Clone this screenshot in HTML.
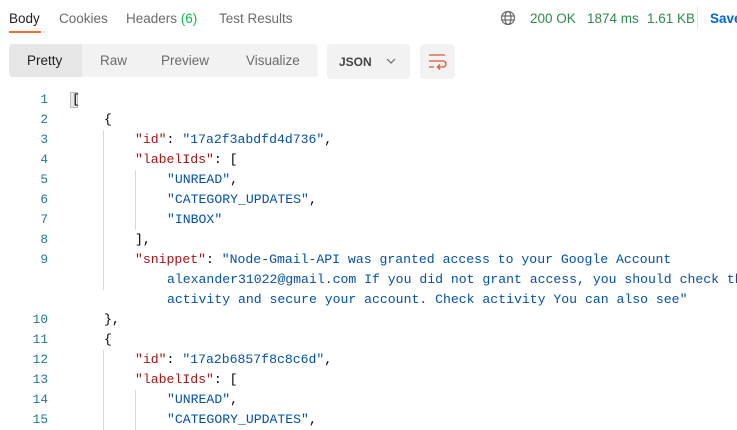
<!DOCTYPE html>
<html><head><style>
body{margin:0;width:737px;height:415px;overflow:hidden;background:#fff;font-family:"Liberation Sans",sans-serif;position:relative}
.t{position:absolute;top:11px;font-size:13.5px;color:#6b6b6b}
.ul{position:absolute;left:9px;top:31px;width:32px;height:2px;background:#f26b3a}
.seg{position:absolute;left:9px;top:44px;width:309px;height:33px;background:#f2f2f2;border-radius:4px}
.seg .a{position:absolute;left:0;top:0;width:73px;height:33px;background:#e6e6e6;border-radius:4px 0 0 4px}
.s{position:absolute;top:53px;font-size:13.5px;color:#6b6b6b}
.code{position:absolute;left:0;top:90px;font-family:"Liberation Mono",monospace;font-size:13.15px}
.l{position:absolute;height:20px;line-height:20px;white-space:pre;color:#000}
.n{position:absolute;width:48px;text-align:right;height:20px;line-height:20px;color:#237893;font-family:"Liberation Mono",monospace;font-size:12.8px}
.k{color:#a31515}.v{color:#0451a5}
.g{position:absolute;width:1px;background:#d9d9d9}
</style></head><body>
<div class="t" style="left:9px;color:#212121">Body</div>
<div class="t" style="left:59px">Cookies</div>
<div class="t" style="left:126px">Headers <span style="color:#0cbb52">(6)</span></div>
<div class="t" style="left:219px">Test Results</div>
<div class="ul"></div>
<svg style="position:absolute;left:500px;top:10px" width="16" height="16" viewBox="0 0 16 16" fill="none" stroke="#6b6b6b" stroke-width="1.2"><circle cx="8" cy="8" r="6.5"/><ellipse cx="8" cy="8" rx="3" ry="6.5"/><path d="M1.5 6h13M1.5 10h13"/></svg>
<div class="t" style="left:530px;color:#2f8a50">200 OK</div>
<div class="t" style="left:587px;color:#2f8a50">1874 ms</div>
<div class="t" style="left:647px;color:#2f8a50">1.61 KB</div>
<div style="position:absolute;left:697px;top:7px;width:1px;height:22px;background:#e6e6e6"></div>
<div class="t" style="left:710px;color:#0265d2;font-weight:bold">Save</div>
<div class="seg"><div class="a"></div></div>
<div class="s" style="left:27px;color:#212121">Pretty</div>
<div class="s" style="left:100px">Raw</div>
<div class="s" style="left:161px">Preview</div>
<div class="s" style="left:246px">Visualize</div>
<div style="position:absolute;left:327px;top:44px;width:83px;height:35px;background:#f2f2f2;border-radius:4px"></div>
<div class="s" style="left:339px;top:55px;color:#444;font-weight:bold;font-size:12px">JSON</div>
<svg style="position:absolute;left:386px;top:57px" width="10" height="8" viewBox="0 0 10 8"><path d="M1 2l4 4 4-4" fill="none" stroke="#6b6b6b" stroke-width="1.2"/></svg>
<div style="position:absolute;left:420px;top:44px;width:35px;height:35px;background:#f2f2f2;border-radius:4px"></div>
<svg style="position:absolute;left:427px;top:53px" width="22" height="18" viewBox="0 0 22 18" fill="none" stroke="#e0532c" stroke-width="1.3"><path d="M2 2h16M2 8h14a3 3 0 0 1 0 6h-5M13 11.5l-2.5 2.5 2.5 2.5M2 14h5"/></svg>
<div class="code">
<div class="g" style="left:103px;top:40px;height:160px"></div>
<div class="g" style="left:135px;top:80px;height:60px"></div>
<div class="g" style="left:103px;top:260px;height:80px"></div>
<div class="g" style="left:135px;top:300px;height:40px"></div>
<div style="position:absolute;left:70px;top:2px;width:8px;height:16px;background:#e8e8e8;border:1px solid #bbb;box-sizing:border-box"></div>
<div class="n" style="top:0">1</div><div class="l" style="left:72px;top:0">[</div>
<div class="n" style="top:20px">2</div><div class="l" style="left:104px;top:20px">{</div>
<div class="n" style="top:40px">3</div><div class="l" style="left:135px;top:40px"><span class="k">"id"</span>: <span class="v">"17a2f3abdfd4d736"</span>,</div>
<div class="n" style="top:60px">4</div><div class="l" style="left:135px;top:60px"><span class="k">"labelIds"</span>: [</div>
<div class="n" style="top:80px">5</div><div class="l" style="left:167px;top:80px"><span class="v">"UNREAD"</span>,</div>
<div class="n" style="top:100px">6</div><div class="l" style="left:167px;top:100px"><span class="v">"CATEGORY_UPDATES"</span>,</div>
<div class="n" style="top:120px">7</div><div class="l" style="left:167px;top:120px"><span class="v">"INBOX"</span></div>
<div class="n" style="top:140px">8</div><div class="l" style="left:135px;top:140px">],</div>
<div class="n" style="top:160px">9</div><div class="l" style="left:135px;top:160px"><span class="k">"snippet"</span>: <span class="v">"Node-Gmail-API was granted access to your Google Account</span></div>
<div class="l v" style="left:167px;top:180px">alexander31022@gmail.com If you did not grant access, you should check this</div>
<div class="l v" style="left:167px;top:200px">activity and secure your account. Check activity You can also see"</div>
<div class="n" style="top:220px">10</div><div class="l" style="left:104px;top:220px">},</div>
<div class="n" style="top:240px">11</div><div class="l" style="left:104px;top:240px">{</div>
<div class="n" style="top:260px">12</div><div class="l" style="left:135px;top:260px"><span class="k">"id"</span>: <span class="v">"17a2b6857f8c8c6d"</span>,</div>
<div class="n" style="top:280px">13</div><div class="l" style="left:135px;top:280px"><span class="k">"labelIds"</span>: [</div>
<div class="n" style="top:300px">14</div><div class="l" style="left:167px;top:300px"><span class="v">"UNREAD"</span>,</div>
<div class="n" style="top:320px">15</div><div class="l" style="left:167px;top:320px"><span class="v">"CATEGORY_UPDATES"</span>,</div>
</div>
</body></html>
